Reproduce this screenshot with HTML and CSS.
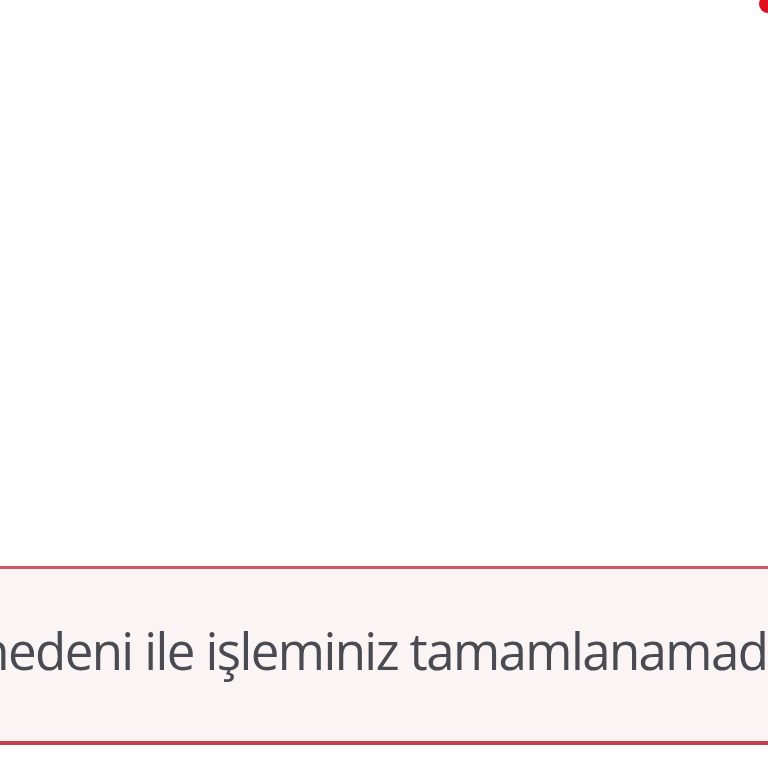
FILE: index.html
```html
<!DOCTYPE html>
<html lang="tr">
<head>
<meta charset="utf-8">
<link rel="stylesheet" href="styles.css">
</head>
<body>
<div class="page">
  <span class="dot"></span>
  <div class="alert">
    <p class="msg">Teknik bir sorun nedeni ile işleminiz tamamlanamadı.</p>
  </div>
</div>
</body>
</html>
```
FILE: styles.css
```css
html, body {
  margin: 0;
  padding: 0;
  background: #ffffff;
}
.page {
  position: relative;
  width: 768px;
  height: 768px;
  overflow: hidden;
  padding-top: 566px;
  box-sizing: border-box;
}
.dot {
  position: absolute;
  left: 759px;
  top: -5px;
  width: 18px;
  height: 18px;
  border-radius: 50%;
  background: #e0101e;
}
.alert {
  height: 172px;
  background: #fbf4f4;
  border-top: 3px solid #c95a63;
  border-bottom: 4px solid #c63e47;
  box-sizing: content-box;
  display: flex;
  align-items: center;
  white-space: nowrap;
}
.msg {
  margin: 0 0 9px -392px;
  font-family: "Open Sans", sans-serif;
  font-size: 51px;
  letter-spacing: -1.6px;
  color: #4a4a52;
  line-height: 1;
}
```
